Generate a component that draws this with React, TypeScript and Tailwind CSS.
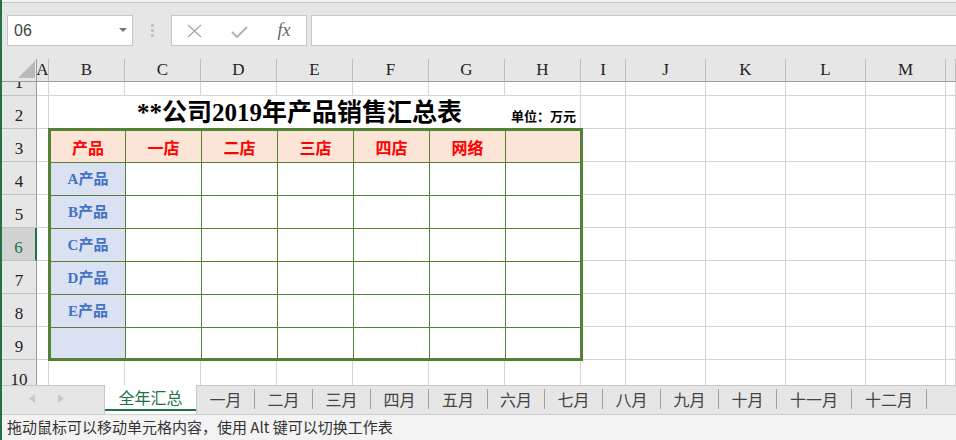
import React from "react";

const COLS = ["A", "B", "C", "D", "E", "F", "G", "H", "I", "J", "K", "L", "M", "N"];
const MERGED = ["B", "C", "D", "E", "F", "G", "H"];
const ROWS = [1, 2, 3, 4, 5, 6, 7, 8, 9, 10];
const SELECTED_ROW = 6;

const HEAD = ["产品", "一店", "二店", "三店", "四店", "网络", ""];
const PRODUCTS = ["A产品", "B产品", "C产品", "D产品", "E产品", ""];

const TABS = [
  { name: "一月", w: "w-[58px]" },
  { name: "二月", w: "w-[58px]" },
  { name: "三月", w: "w-[58px]" },
  { name: "四月", w: "w-[58px]" },
  { name: "五月", w: "w-[59px]" },
  { name: "六月", w: "w-[57px]" },
  { name: "七月", w: "w-[58px]" },
  { name: "八月", w: "w-[58px]" },
  { name: "九月", w: "w-[58px]" },
  { name: "十月", w: "w-[58px]" },
  { name: "十一月", w: "w-[75px]" },
  { name: "十二月", w: "w-[75px]" },
];

function RowHeader({ row }: { row: number }) {
  const selected = row === SELECTED_ROW;
  return (
    <div
      className={
        "flex items-end justify-center overflow-hidden pb-[4px] border-b border-b-[#c4c4c4] " +
        (selected
          ? "bg-[#d2d2d2] border-r-2 border-r-[#217346] text-[#217346]"
          : "bg-[#e6e6e6] border-r border-r-[#9b9b9b] text-[#222]")
      }
    >
      <span className="text-[17px] leading-[17px] font-['Liberation_Serif',serif]">{row}</span>
    </div>
  );
}

function SheetGrid() {
  const cells: React.ReactNode[] = [];

  // column header row
  cells.push(
    <div key="corner" className="bg-[#e6e6e6] border-r border-b border-[#9b9b9b] flex items-end justify-end pr-[1px] pb-[3px]">
      <svg width="17" height="17" viewBox="0 0 17 17">
        <polygon points="17,0 17,17 0,17" fill="#b9b9b9" />
      </svg>
    </div>
  );
  for (const c of COLS) {
    cells.push(
      <div
        key={"h" + c}
        className="bg-[#e6e6e6] border-r border-r-[#bdbdbd] border-b border-b-[#9b9b9b] flex items-center justify-center overflow-hidden text-[17px] text-[#222] font-['Liberation_Serif',serif]"
      >
        {c === "N" ? "" : c}
      </div>
    );
  }

  for (const r of ROWS) {
    cells.push(<RowHeader key={"r" + r} row={r} />);
    for (const c of COLS) {
      // B2:H2 is merged, B3:H9 is the table; both placed explicitly
      if (MERGED.includes(c) && r >= 2 && r <= 9) continue;
      cells.push(<div key={c + r} className="bg-white border-r border-b border-[#d4d4d4]" />);
    }
  }

  return (
    <div className="h-[326px] overflow-hidden bg-white grid grid-cols-[35px_12px_76px_76px_76px_76px_76px_76px_76px_45px_80px_80px_80px_80px_1fr] grid-rows-[23px_14px_33px_33px_33px_33px_33px_33px_33px_33px_33px]">
      {cells}

      {/* merged title cell B2:H2 */}
      <div className="col-start-3 col-end-10 row-start-3 row-end-4 bg-white border-r border-b border-[#d4d4d4] flex items-end justify-between pl-[88px] pr-[4px]">
        <span className="pb-[3px] text-[25px] leading-none font-bold text-black font-['Liberation_Serif','Noto_Sans_CJK_SC',serif]">
          **公司2019年产品销售汇总表
        </span>
        <span className="pb-[6px] text-[13px] leading-none font-bold text-black font-['Noto_Sans_CJK_SC',sans-serif]">
          单位：万元
        </span>
      </div>

      {/* summary table B3:H9 */}
      <div className="col-start-3 col-end-10 row-start-4 row-end-11 -ml-px -mt-px -mr-[2px] -mb-px border-[3px] border-[#548235] bg-white grid grid-cols-[75px_76px_76px_76px_76px_76px_74px] grid-rows-[32px_33px_33px_33px_33px_33px_30px]">
        {HEAD.map((h, i) => (
          <div
            key={"th" + i}
            className={
              "bg-[#fce4d6] border-b border-[#548235] flex items-center justify-center text-[16px] font-bold text-[#ff0000] font-['Noto_Sans_CJK_SC',sans-serif] " +
              (i < 6 ? "border-r" : "")
            }
          >
            {h}
          </div>
        ))}
        {PRODUCTS.map((p, ri) =>
          HEAD.map((_, ci) => (
            <div
              key={"td" + ri + "-" + ci}
              className={
                "border-[#548235] flex items-center justify-center " +
                (ci < 6 ? "border-r " : "") +
                (ri < 5 ? "border-b " : "") +
                (ci === 0 ? "bg-[#d9e1f2] text-[15px] font-bold text-[#4472c4] font-['Liberation_Serif','Noto_Sans_CJK_SC',serif]" : "bg-white")
              }
            >
              {ci === 0 ? p : ""}
            </div>
          ))
        )}
      </div>
    </div>
  );
}

export default function App() {
  return (
    <div className="w-[956px] h-[440px] overflow-hidden flex flex-col bg-[#e6e6e6] border-l-2 border-[#217346] font-['Noto_Sans_CJK_SC',sans-serif]">
      <div className="h-[2px] bg-[#f3f3f3]" />
      <div className="h-px bg-[#c8c8c8]" />
      <div className="h-[12px]" />

      {/* formula bar */}
      <div className="h-[31px] flex">
        <div className="ml-[5px] w-[126px] bg-white border border-[#c6c6c6] flex items-center pl-[6px] pr-[5px]">
          <span className="flex-1 text-[16px] text-[#444] font-['Liberation_Sans',sans-serif]">06</span>
          <svg width="8" height="5" viewBox="0 0 8 5">
            <polygon points="0,0 8,0 4,4" fill="#777" />
          </svg>
        </div>
        <div className="w-[38px] flex flex-col items-center justify-center gap-[2px]">
          <div className="w-[3px] h-[3px] bg-[#c2c2c2]" />
          <div className="w-[3px] h-[3px] bg-[#c2c2c2]" />
          <div className="w-[3px] h-[3px] bg-[#c2c2c2]" />
        </div>
        <div className="w-[136px] bg-white border border-[#c6c6c6] flex items-center">
          <div className="w-[45px] flex justify-center">
            <svg width="15" height="14" viewBox="0 0 15 14">
              <path d="M1 1 L14 13 M14 1 L1 13" stroke="#a9a9a9" strokeWidth="1.3" fill="none" />
            </svg>
          </div>
          <div className="w-[45px] flex justify-center pt-[2px]">
            <svg width="17" height="12" viewBox="0 0 17 12">
              <path d="M1 6 L6 11 L16 1" stroke="#b3b3b3" strokeWidth="2" fill="none" />
            </svg>
          </div>
          <div className="w-[44px] flex justify-center">
            <span className="text-[18px] italic text-[#666] font-['Liberation_Serif',serif]">fx</span>
          </div>
        </div>
        <div className="ml-[4px] flex-1 bg-white border-y border-l border-[#c6c6c6]" />
      </div>
      <div className="h-[13px]" />

      <SheetGrid />

      {/* sheet tabs */}
      <div className="h-[29px] border-t border-[#c6c6c6] flex">
        <div className="w-[102px] flex items-center pb-[3px]">
          <svg className="ml-[27px]" width="6" height="9" viewBox="0 0 6 9">
            <polygon points="6,0 6,9 0,4.5" fill="#c9c9c9" />
          </svg>
          <svg className="ml-[23px]" width="6" height="9" viewBox="0 0 6 9">
            <polygon points="0,0 0,9 6,4.5" fill="#c9c9c9" />
          </svg>
        </div>
        <div className="w-[93px] -mt-px bg-white border-x border-[#c6c6c6] flex flex-col">
          <div className="flex-1 flex items-center justify-center text-[16px] text-[#217346]">全年汇总</div>
          <div className="h-[2px] bg-[#217346] mb-[3px]" />
        </div>
        {TABS.map((t) => (
          <div key={t.name} className={t.w + " flex items-center pb-[3px]"}>
            <div className="flex-1 text-center text-[16px] text-[#444]">{t.name}</div>
            <div className="w-px h-[20px] bg-[#a0a0a0]" />
          </div>
        ))}
      </div>

      {/* status bar */}
      <div className="flex-1 bg-[#f3f3f3] border-t border-[#d0d0d0] px-[5px] flex items-center text-[15px] text-[#333]">
        拖动鼠标可以移动单元格内容，使用 Alt 键可以切换工作表
      </div>
    </div>
  );
}
